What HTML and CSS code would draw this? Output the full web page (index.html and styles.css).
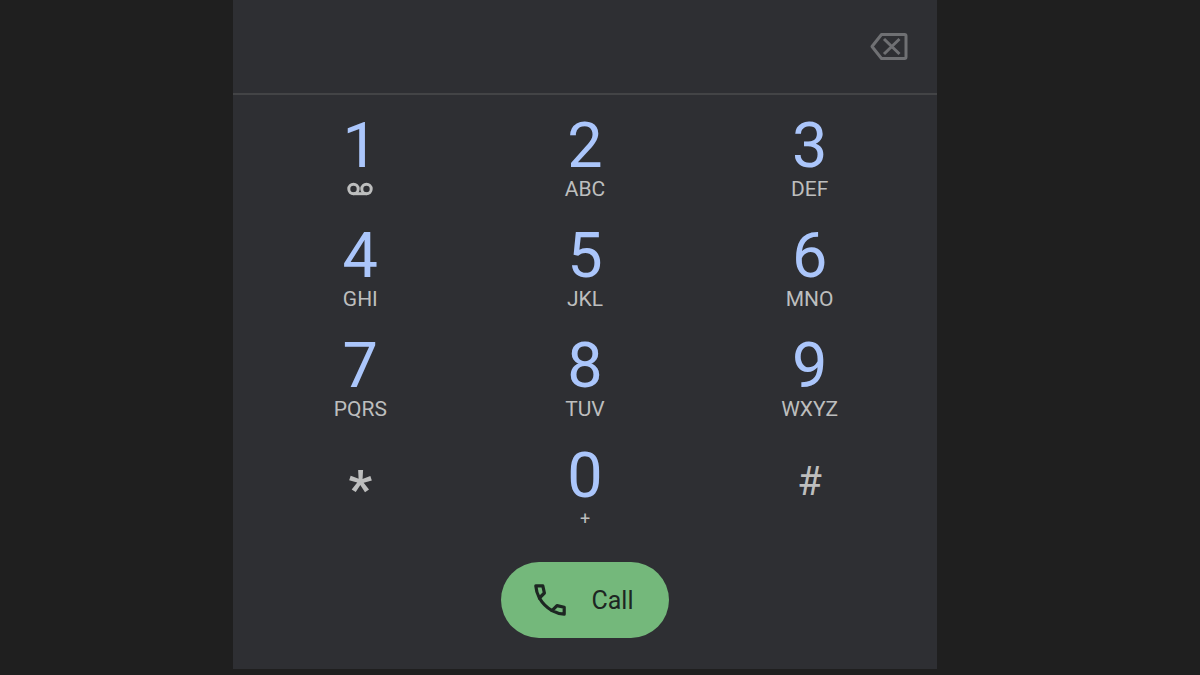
FILE: index.html
```
<!DOCTYPE html>
<html lang="en">
<head>
	<meta charset="utf-8">
	<meta name="viewport" content="width=device-width, initial-scale=1">
	<title>Phone</title>
	<link rel="stylesheet" href="styles.css">
</head>
<body>
	<main class="dialer">
		<div class="display">
			<input class="number" type="tel" aria-label="Phone number">
			<button class="erase" type="button" aria-label="Delete">
				<svg width="40" height="30" viewBox="0 0 40 30" fill="none" stroke="currentColor" stroke-width="3">
					<path d="M12.5 2.5H35.5Q37 2.5 37 4V25Q37 26.5 35.5 26.5H12.5L3 14.5Z" stroke-linejoin="round"/>
					<path d="M15 7L30.5 22M30.5 7L15 22"/>
				</svg>
			</button>
		</div>

		<div class="keypad">
			<button class="key" type="button" aria-label="1, voicemail">
				<span class="digit">1</span>
				<span class="letters">
					<svg class="voicemail" width="26" height="14" viewBox="0 0 26 14" fill="none" stroke="currentColor" stroke-width="3">
						<circle cx="6.5" cy="7" r="4.7"/>
						<circle cx="19.5" cy="7" r="4.7"/>
						<path d="M6.5 11.7H19.5"/>
					</svg>
				</span>
			</button>
			<button class="key" type="button"><span class="digit">2</span><span class="letters">ABC</span></button>
			<button class="key" type="button"><span class="digit">3</span><span class="letters">DEF</span></button>
			<button class="key" type="button"><span class="digit">4</span><span class="letters">GHI</span></button>
			<button class="key" type="button"><span class="digit">5</span><span class="letters">JKL</span></button>
			<button class="key" type="button"><span class="digit">6</span><span class="letters">MNO</span></button>
			<button class="key" type="button"><span class="digit">7</span><span class="letters">PQRS</span></button>
			<button class="key" type="button"><span class="digit">8</span><span class="letters">TUV</span></button>
			<button class="key" type="button"><span class="digit">9</span><span class="letters">WXYZ</span></button>
			<button class="key" type="button"><span class="star">*</span></button>
			<button class="key" type="button"><span class="digit">0</span><span class="letters plus">+</span></button>
			<button class="key" type="button"><span class="hash">#</span></button>
		</div>

		<button class="call" type="button">
			<svg width="32" height="32" viewBox="0 0 32 32" fill="none" stroke="currentColor" stroke-width="3.2" stroke-linejoin="round">
				<path d="M1.8 1.8H8.8L10.4 9L5.4 14Q2.2 8 1.8 1.8Z"/>
				<path d="M5.4 14Q10 22 18 26.6"/>
				<path d="M30.2 30.2V23.2L23 21.6L18 26.6Q24 29.8 30.2 30.2Z"/>
			</svg>
			<span>Call</span>
		</button>
	</main>
</body>
</html>
```
FILE: styles.css
```
body {
	margin: 0;
	display: grid;
	grid-template-columns: 233fr 704fr 263fr;
	background: #1f1f1f;
	font-family: Roboto, Arial, sans-serif;
}

button,
input {
	border: 0;
	padding: 0;
	background: none;
	color: inherit;
	font: inherit;
}

button {
	cursor: pointer;
}

svg {
	display: block;
}

.dialer {
	grid-column: 2;
	display: flex;
	flex-direction: column;
	background: #2e2f33;
	color: #bdbebe;
	padding-bottom: 31px;
}

.display {
	display: flex;
	align-items: center;
	height: 93px;
	padding: 0 28px;
	border-bottom: 2px solid #434446;
}

.number {
	flex: 1;
	min-width: 0;
	height: 60px;
	font-size: 40px;
	outline: none;
}

.erase {
	color: #6f7073;
}

.keypad {
	display: grid;
	grid-template-columns: repeat(3, 1fr);
	row-gap: 24px;
	padding: 20px 15px 31px;
}

.key {
	display: flex;
	flex-direction: column;
	align-items: center;
	height: 86px;
}

.digit {
	font-size: 63px;
	line-height: 62px;
	color: #abc6fb;
}

.letters {
	font-size: 21px;
	line-height: 24px;
}

.voicemail {
	margin-top: 5px;
}

.plus {
	font-size: 18px;
}

.star {
	font-size: 52px;
	font-weight: 700;
	line-height: 90px;
}

.hash {
	font-size: 40px;
	line-height: 74px;
}

.call {
	align-self: center;
	display: flex;
	align-items: center;
	gap: 25px;
	height: 76px;
	padding: 0 35px 0 33px;
	border-radius: 38px;
	background: #74b87b;
	color: #1d2622;
	font-size: 25px;
}
```
